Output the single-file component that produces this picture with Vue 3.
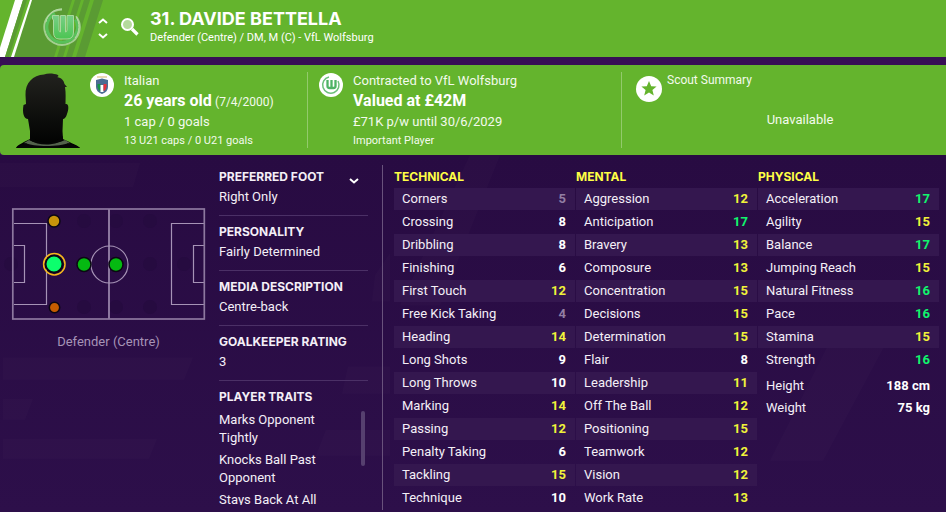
<script setup>
const details = [
  { label: 'Preferred Foot', value: 'Right Only' },
  { label: 'Personality', value: 'Fairly Determined' },
  { label: 'Media Description', value: 'Centre-back' },
  { label: 'Goalkeeper Rating', value: '3' },
]

const traits = ['Marks Opponent Tightly', 'Knocks Ball Past Opponent', 'Stays Back At All']

const groups = [
  {
    name: 'Technical',
    rows: [
      ['Corners', 5], ['Crossing', 8], ['Dribbling', 8], ['Finishing', 6], ['First Touch', 12],
      ['Free Kick Taking', 4], ['Heading', 14], ['Long Shots', 9], ['Long Throws', 10],
      ['Marking', 14], ['Passing', 12], ['Penalty Taking', 6], ['Tackling', 15], ['Technique', 10],
    ],
  },
  {
    name: 'Mental',
    rows: [
      ['Aggression', 12], ['Anticipation', 17], ['Bravery', 13], ['Composure', 13],
      ['Concentration', 15], ['Decisions', 15], ['Determination', 15], ['Flair', 8],
      ['Leadership', 11], ['Off The Ball', 12], ['Positioning', 15], ['Teamwork', 12],
      ['Vision', 12], ['Work Rate', 13],
    ],
  },
  {
    name: 'Physical',
    rows: [
      ['Acceleration', 17], ['Agility', 15], ['Balance', 17], ['Jumping Reach', 15],
      ['Natural Fitness', 16], ['Pace', 16], ['Stamina', 15], ['Strength', 16],
    ],
    body: [['Height', '188 cm'], ['Weight', '75 kg']],
  },
]

const unusedPositions = [
  [84, 14], [116, 14], [150, 14], [11, 57], [150, 57], [184, 57], [84, 100], [116, 100], [150, 100],
]

function tier(value) {
  if (value > 15) return 'excellent'
  if (value > 10) return 'good'
  if (value > 5) return 'fair'
  return 'poor'
}
</script>

<template>
  <div class="page">
    <header class="titlebar">
      <svg class="stripes" width="110" height="57" viewBox="0 0 110 57" aria-hidden="true">
        <path fill="#5a9b33" d="M31 0H72L54 57H13ZM75 0H81L63 57H57ZM84 0H90L72 57H66ZM94 0H103L85 57H76Z" />
        <path fill="#fff" d="M15 0H23L5 57H-3Z" />
        <path fill="#5a9b33" d="M23 0H27L9 57H5Z" />
        <path fill="#fff" d="M30 0H32L14 57H11Z" />
      </svg>
      <svg class="crest" width="40" height="40" viewBox="0 0 40 40" role="img" aria-label="VfL Wolfsburg">
        <defs>
          <linearGradient id="crest-fill" x1="0" y1="0" x2="0" y2="1">
            <stop offset="0" stop-color="#78ce86" />
            <stop offset="1" stop-color="#4cc552" />
          </linearGradient>
        </defs>
        <path d="M20 2.500A17.700 17.700 0 1 0 34.500 10" fill="none" stroke="#a3cf90" stroke-width="2" />
        <path d="M13 6.500A15.300 15.300 0 1 0 33.500 12.500" fill="none" stroke="#58c05a" stroke-width="3" />
        <path d="M20 2C11 2 5 8 4 15M34 9C38 16 38 25 33 31" fill="none" stroke="#b7dca8" stroke-width="1" />
        <path d="M10.500 8.500H17V23Q17 25 18.500 25V8.500H23.500V25Q25 25 25 23V8.500H31.500V25Q31.500 32 25 32H17Q11.500 32 11.500 25V13L10.500 12Z" fill="url(#crest-fill)" stroke="#a9d99c" stroke-width="1" />
      </svg>
      <div class="stepper">
        <button type="button" aria-label="Previous player">
          <svg width="10" height="6" viewBox="0 0 10 6"><path d="M1 5L5 1.500L9 5" /></svg>
        </button>
        <button type="button" aria-label="Next player">
          <svg width="10" height="6" viewBox="0 0 10 6"><path d="M1 1L5 4.500L9 1" /></svg>
        </button>
      </div>
      <button type="button" class="search" aria-label="Search">
        <svg width="18" height="18" viewBox="0 0 18 18">
          <circle cx="6.500" cy="6.500" r="5.500" fill="#b5da9c" stroke="#fff" stroke-width="2" />
          <path d="M11 11L16.500 16.500" stroke="#fff" stroke-width="3.200" />
        </svg>
      </button>
      <div class="identity">
        <h1>31. DAVIDE BETTELLA</h1>
        <p>Defender (Centre) / DM, M (C) - VfL Wolfsburg</p>
      </div>
    </header>

    <section class="summary">
      <div class="person">
        <svg class="portrait" width="66" height="76" viewBox="0 0 66 76" aria-hidden="true">
          <defs>
            <linearGradient id="head" x1="0" y1="0" x2="0" y2="1">
              <stop offset="0" stop-color="#22221e" />
              <stop offset=".65" stop-color="#0b0c0a" />
              <stop offset="1" stop-color="#000" />
            </linearGradient>
          </defs>
          <path fill="url(#head)" d="M0 75C2 71 9 69 14 66L14 58L12 46C8 46 6 40 7.500 32L10 31L9.500 22C9 10 17 2 28 1.500C32 0 38 .5 42 2C43 3 42 4 41 4C46 5 48 8 48.500 11L51 14L49 14C50 20 49.500 26 49.500 31C53 30 53 36 51 41C50 45 48 46 47 46L46.500 58L47 66C52 69 60 71 64 75Z" />
          <path fill="#53624c" d="M13 67C22 72 39 72 49 67L54 70C46 76 18 76 8 70Z" />
          <path fill="#050505" d="M14 63C22 72 39 72 47 63L46 67C39 73 22 73 14 67ZM0 75C4 72 8 71 10 70C16 74 45 74 52 70C57 72 62 73 64 75Z" />
        </svg>
        <svg class="badge" width="24" height="24" viewBox="0 0 24 24" role="img" aria-label="Italy">
          <circle cx="12" cy="12" r="12" fill="#fff" />
          <path fill="#ead9b4" d="M7 3H17V5H7Z" />
          <path fill="#4b6c93" d="M6 7L12 5.500L18 7V14Q18 19 12 21Q6 19 6 14Z" />
          <path fill="#159447" d="M7.500 11H10.500V18Q8 17 7.500 14Z" />
          <path fill="#fff" d="M10.500 12H13.500V19H10.500Z" />
          <path fill="#e7303c" d="M13.500 11H16.500V14Q16 17 13.500 18Z" />
        </svg>
        <div class="lines">
          <p>Italian</p>
          <p class="main"><strong>26 years old</strong> <small>(7/4/2000)</small></p>
          <p>1 cap / 0 goals</p>
          <p class="minor">13 U21 caps / 0 U21 goals</p>
        </div>
      </div>

      <div class="contract">
        <svg class="badge" width="24" height="24" viewBox="0 0 24 24" role="img" aria-label="VfL Wolfsburg">
          <circle cx="12" cy="12" r="12" fill="#fff" />
          <path d="M10 4A8.200 8.200 0 1 0 19 8" fill="none" stroke="#6cc07a" stroke-width="1.500" />
          <path d="M8.500 7V13Q8.500 15 10.500 15H14.500Q16.500 15 16.500 13V7M12.500 7V14" fill="none" stroke="#4fb365" stroke-width="2.300" />
        </svg>
        <div class="lines">
          <p>Contracted to VfL Wolfsburg</p>
          <p class="main"><strong>Valued at £42M</strong></p>
          <p>£71K p/w until 30/6/2029</p>
          <p class="minor">Important Player</p>
        </div>
      </div>

      <div class="scout">
        <div class="scout-head">
          <svg width="26" height="26" viewBox="0 0 26 26" aria-hidden="true">
            <circle cx="13" cy="13" r="13" fill="#fff" />
            <path fill="#64b42d" d="M13 5L15.200 10.200L20.600 10.500L16.400 14L17.800 19.500L13 16.600L8.200 19.500L9.600 14L5.400 10.500L10.800 10.200Z" />
          </svg>
          <h2>Scout Summary</h2>
        </div>
        <p>Unavailable</p>
      </div>
    </section>

    <main class="content">
      <svg class="backdrop" viewBox="0 0 946 357" preserveAspectRatio="none" aria-hidden="true">
        <path d="M0 8H140L133 32H0ZM3 202H193L184 224H3ZM3 243H33L25 264H3ZM3 283H157L149 303H3ZM348 211H390V238H342ZM326 274H390V300H316ZM375 120L390 98V146H372ZM833 180H890L823 305H770ZM470 0H500L440 150H400Z" />
      </svg>

      <figure class="positions">
        <svg viewBox="0 0 207 114" role="img" aria-label="Position map">
          <g fill="#260b40">
            <circle v-for="([x, y], i) in unusedPositions" :key="i" :cx="x" :cy="y" r="7" />
          </g>
          <g fill="none" stroke="#a693b6" stroke-width="1.200">
            <path d="M14 16.500H46.500V97.500H14M14 38.500H24.500V75.500H14M204 16.500H171.500V97.500H204M204 38.500H193.500V75.500H204" />
            <path d="M109 2V112" stroke-width="1.600" />
            <circle cx="109.500" cy="57.500" r="18.500" />
            <rect x="12.800" y="2" width="191.500" height="110" stroke="#8d789f" stroke-width="1.700" />
          </g>
          <g stroke="#0c0714" stroke-width="1.500">
            <circle cx="54" cy="14" r="6" fill="#c8930b" />
            <circle cx="84" cy="57.500" r="7" fill="#05b911" />
            <circle cx="116" cy="57.500" r="7" fill="#05b911" />
            <circle cx="54.500" cy="100.500" r="5.200" fill="#c65c00" />
            <circle cx="54" cy="57" r="8.500" fill="#0cff6d" stroke-width="2" />
          </g>
          <circle cx="54.300" cy="57.200" r="10.700" fill="none" stroke="#f5b81c" stroke-width="1.500" />
        </svg>
        <figcaption>Defender (Centre)</figcaption>
      </figure>

      <section class="profile">
        <button type="button" class="expand" aria-label="Choose panel">
          <svg width="10" height="6" viewBox="0 0 10 6"><path d="M1 1L5 4.500L9 1" /></svg>
        </button>
        <dl>
          <div v-for="item in details" :key="item.label">
            <dt>{{ item.label }}</dt>
            <dd>{{ item.value }}</dd>
          </div>
        </dl>
        <h2>Player Traits</h2>
        <div class="traits">
          <ul>
            <li v-for="trait in traits" :key="trait">{{ trait }}</li>
          </ul>
          <span class="thumb"></span>
        </div>
      </section>

      <section class="attributes">
        <div v-for="group in groups" :key="group.name">
          <table class="ratings">
            <caption>{{ group.name }}</caption>
            <tbody>
              <tr v-for="[name, value] in group.rows" :key="name">
                <th scope="row">{{ name }}</th>
                <td :class="tier(value)">{{ value }}</td>
              </tr>
            </tbody>
          </table>
          <table v-if="group.body" class="body">
            <tbody>
              <tr v-for="[name, value] in group.body" :key="name">
                <th scope="row">{{ name }}</th>
                <td>{{ value }}</td>
              </tr>
            </tbody>
          </table>
        </div>
      </section>
    </main>
  </div>
</template>

<style>
body {
  margin: 0;
  background: #2c0d48;
}
</style>

<style scoped>
.page {
  display: flex;
  flex-direction: column;
  min-height: 100vh;
  background: #2c0d48;
  color: #f4eff7;
  font: 13px/20px Roboto, "Liberation Sans", sans-serif;
}
h1, h2, p, dl, dd, ul, figure {
  margin: 0;
  padding: 0;
}
button {
  display: flex;
  padding: 0;
  border: 0;
  background: none;
  cursor: pointer;
}
svg {
  display: block;
  flex: none;
}
.stepper path, .expand path {
  fill: none;
  stroke: #fff;
  stroke-width: 2;
}

.titlebar {
  position: relative;
  display: flex;
  align-items: flex-start;
  height: 57px;
  padding-left: 42px;
  background: #64b42d;
  color: #fff;
}
.stripes {
  position: absolute;
  left: 0;
  top: 0;
}
.crest {
  position: relative;
  margin-top: 7px;
}
.stepper {
  position: relative;
  display: flex;
  flex-direction: column;
  gap: 9px;
  margin: 18px 13px 0 16px;
}
.search {
  margin: 18px 11px 0 0;
}
.identity {
  padding-top: 9px;
}
h1 {
  font: 700 18px/20px Inter, sans-serif;
}
.identity p {
  font-size: 11px;
  line-height: 18px;
}

.summary {
  display: grid;
  grid-template-columns: 307fr 314fr 325fr;
  margin-top: 8px;
  padding: 7px 0;
  border-radius: 4px 0 0 4px;
  background: #64b42d;
  box-shadow: 0 0 0 8px #370f55;
  color: #f3faec;
}
.summary > div {
  display: flex;
  height: 76px;
}
.summary > div + div {
  border-left: 1px solid #93ca6c;
}
.portrait {
  margin: 1px 8px 0 16px;
}
.badge {
  margin: 1px 10px 0 0;
}
.contract {
  padding-left: 11px;
}
.lines {
  margin-top: -1px;
}
.lines p {
  line-height: 20px;
}
.lines .minor {
  line-height: 18px;
  font-size: 11px;
}
.main strong {
  font-size: 16px;
  color: #fff;
}
.lines small {
  font-size: 12px;
}
.summary .scout {
  flex-direction: column;
}
.scout-head {
  display: flex;
  gap: 5px;
  padding: 4px 14px 0;
}
.scout-head h2 {
  margin-top: -6px;
  font-size: 12px;
  font-weight: 400;
}
.scout p {
  padding: 8px 0 0 32px;
  text-align: center;
}

.content {
  position: relative;
  display: grid;
  flex: 1;
  grid-template-columns: 207px 149px minmax(0, 1fr);
  column-gap: 12px;
  padding: 10px 7px 3px 0;
  background: linear-gradient(#280b42, #2d0f4a);
}
.backdrop {
  position: absolute;
  inset: 0;
  width: 100%;
  height: 100%;
  fill: #fff;
  opacity: .01;
}
.content > :not(.backdrop) {
  position: relative;
}
.positions {
  padding-top: 42px;
  text-align: center;
  color: #a693b6;
}
.positions figcaption {
  padding: 11px 0 0 10px;
}

.profile h2, dt, caption {
  font: 700 12px/16px Inter, sans-serif;
  text-transform: uppercase;
}
.profile {
  padding-top: 4px;
}
.expand {
  position: absolute;
  right: 9px;
  top: 13px;
}
dl > div {
  padding-bottom: 8px;
  border-bottom: 1px solid #4b3066;
  margin-bottom: 8px;
}
dd {
  padding: 2px 0 0;
}
.traits {
  display: flex;
  justify-content: space-between;
  height: 94px;
  margin-top: 6px;
  padding-right: 3px;
  overflow: hidden;
}
ul {
  width: 124px;
  list-style: none;
}
li {
  margin-bottom: 4px;
  line-height: 18px;
}
.thumb {
  width: 4px;
  height: 55px;
  border-radius: 2px;
  background: #56406f;
}

.attributes {
  display: grid;
  grid-template-columns: repeat(3, minmax(0, 1fr));
  gap: 1px;
  align-items: start;
  margin-left: 2px;
  padding: 4px 0 0 11px;
  border-left: 1px solid #69527c;
}
table {
  width: 100%;
  border-collapse: separate;
  border-spacing: 0;
}
caption {
  padding-bottom: 3px;
  color: #ffff45;
  text-align: left;
}
th, td {
  height: 22px;
  padding: 0 9px 0 8px;
  border-bottom: 1px solid transparent;
  background-clip: padding-box;
  line-height: 22px;
  text-align: left;
  font-weight: 400;
}
td {
  text-align: right;
  font-weight: 700;
  color: #fff;
}
.ratings tr:nth-child(odd) > * {
  background-color: #34174f;
}
.ratings .poor { color: #927ea3; }
.ratings .good { color: #f0f23a; }
.ratings .excellent { color: #10f56d; }
.body {
  margin-top: 3px;
}
.body th, .body td {
  height: 21px;
  line-height: 21px;
}
</style>
